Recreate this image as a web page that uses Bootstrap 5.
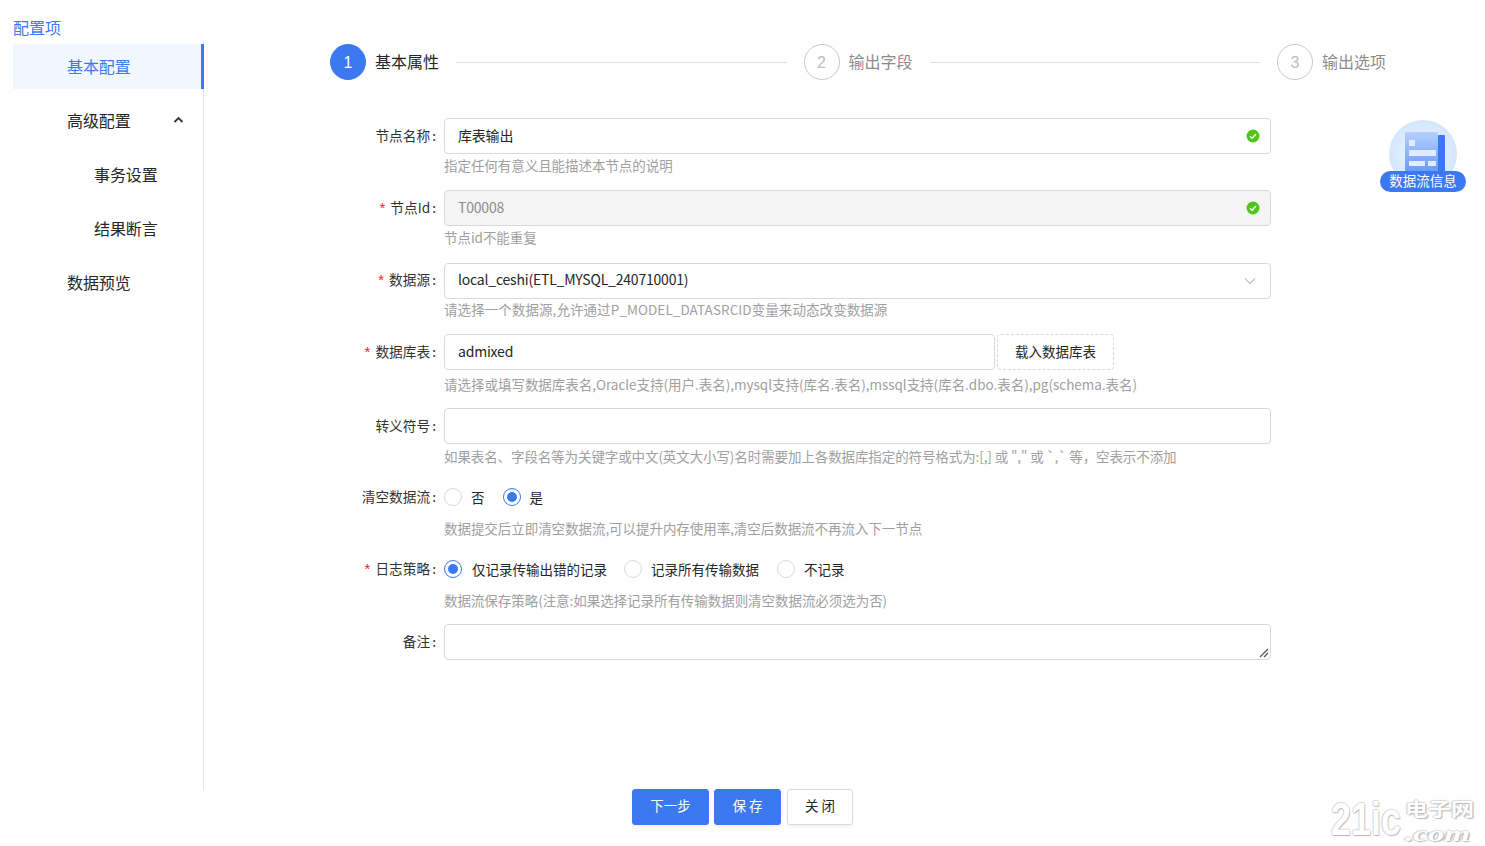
<!DOCTYPE html>
<html lang="zh">
<head>
<meta charset="utf-8">
<title>配置项</title>
<link rel="stylesheet" href="https://cdn.jsdelivr.net/npm/bootstrap@5.3.0/dist/css/bootstrap.min.css">
<style>
:root{--blue:#3c78f0;--line:#d9d9d9;}
html,body{height:100%;}
body{font-family:"Noto Sans CJK SC","Liberation Sans",sans-serif;font-size:14px;color:#262626;background:#fff;overflow:hidden;}
.shell{width:1485px;height:846px;position:relative;}
.upper{height:789px;}
.side{width:204px;flex:none;padding:17px 0 0 13px;}
.side-title{font-size:16px;line-height:20px;color:var(--blue);margin-bottom:2px;}
.side-list{border-right:1px solid #e8e8e8;height:751px;padding-top:5px;}
.side-item{height:45px;line-height:45px;margin-bottom:9px;padding-left:54px;font-size:16px;letter-spacing:-.1px;color:#262626;position:relative;}
.side-item.sub{padding-left:81px;}
.side-item.on{background:#f0f7ff;color:var(--blue);border-right:3px solid var(--blue);margin-right:-1px;}
.chev{position:absolute;left:160px;top:18px;width:11px;height:8px;}
.work{flex:1;padding-top:44px;min-width:0;}
.steps{margin-left:126px;width:1056px;}
.step{flex:1 1 0;}
.step:last-child{flex:none;}
.step-dot{width:36px;height:36px;border-radius:50%;border:1px solid #c9c9c9;color:#bdbdbd;font-size:16px;flex:none;font-family:"Liberation Sans",sans-serif;padding-top:1px;}
.step.now .step-dot{background:var(--blue);border-color:var(--blue);color:#fff;}
.step-name{font-size:16px;margin-left:9px;color:#8c8c8c;white-space:nowrap;line-height:22px;margin-top:-2px;}
.step.now .step-name{color:#262626;}
.step-line{flex:1;height:1px;background:#e0e0e0;margin:0 17px;}
.fields{margin-top:38px;margin-left:126px;width:941px;}
.field{height:72px;}
.field.h73{height:73px;}
.field.h71{height:71px;}
.field.h74{height:74px;}
.fld-label{width:106px;flex:none;height:36px;line-height:34px;text-align:right;white-space:nowrap;font-size:13.7px;margin-right:8px;color:#333;}
.fld-label.up{line-height:32px;}
.colon{margin-left:2px;}
.req{color:#f5222d;font-family:"Liberation Sans",sans-serif;margin-right:5px;font-size:15px;}
.fld-body{flex:1;min-width:0;}
.inp{height:36px;border:1px solid var(--line);border-radius:4px;padding:0 13px;line-height:32px;font-size:14px;color:#262626;position:relative;letter-spacing:-.2px;white-space:nowrap;}
.inp.off{background:#f5f5f5;color:#8c8c8c;}
.inp.pick{line-height:30px;}
.inp.short{width:551px;flex:none;}
.hint{font-size:13.5px;line-height:20px;margin-top:1px;color:#a0a0a0;white-space:nowrap;letter-spacing:-.05px;}
.hint.wide{letter-spacing:.07px;margin-top:0;}
.hint.wider{letter-spacing:-.02px;margin-top:4px;}
.hint.tight{letter-spacing:-.1px;margin-top:2px;}
.ok{position:absolute;right:10px;top:10px;width:14px;height:14px;}
.arrow{position:absolute;right:14px;top:13px;width:12px;height:8px;}
.load{width:117px;height:36px;margin-left:2px;border:1px dashed var(--line);border-radius:4px;text-align:center;font-size:13.5px;color:#262626;flex:none;background:#fff;padding:0 0 2px;}
.radio-row{height:34px;align-items:center;}
.dot{width:18px;height:18px;border-radius:50%;border:1px solid var(--line);background:#fff;flex:none;position:relative;}
.dot.sel{border-color:var(--blue);}
.dot.sel::after{content:"";position:absolute;inset:3px;border-radius:50%;background:var(--blue);}
.opt{font-size:13.5px;margin-left:9px;margin-right:18px;white-space:nowrap;line-height:18px;color:#262626;}
.opt.nxt{margin-left:9px;margin-right:18px;}
.opt.fst{margin-left:10px;margin-right:17px;}
.hint.lo{margin-top:4px;}
.area{position:relative;}
.grip{position:absolute;right:1px;bottom:1px;width:10px;height:10px;}
.foot{height:57px;}
.fbtn{height:36px;border-radius:3px;font-size:13.5px;padding:0 0 4px;border:1px solid var(--blue);background:var(--blue);color:#fff;box-shadow:0 2px 3px rgba(0,0,0,.06);}
.fbtn.w1{width:77px;}
.fbtn.w2{width:67px;margin-left:5px;}
.fbtn.w3{width:66px;margin-left:6px;background:#fff;border-color:var(--line);color:#262626;}
.flow-info{position:absolute;left:1380px;top:120px;width:86px;height:72px;}
.flow-info svg{position:absolute;left:9px;top:0;width:68px;height:68px;}
.flow-tag{position:absolute;left:0;top:51px;width:86px;height:21px;border-radius:11px;background:var(--blue);color:#fff;font-size:13.5px;line-height:19px;text-align:center;white-space:nowrap;}
.wm{position:absolute;left:1331px;top:793px;width:148px;height:53px;color:#fff;text-shadow:1px 1px 1px #b5b5b5,-1px 0 1px #d0d0d0,0 -1px 1px #dcdcdc;}
.wm-a{position:absolute;left:0;top:0;font-family:"Liberation Sans",sans-serif;font-weight:700;font-size:46px;line-height:53px;display:inline-block;transform:scaleX(.78);transform-origin:0 50%;}
.wm-b{position:absolute;left:74px;top:2px;font-size:18px;line-height:26px;font-weight:700;display:inline-block;transform:scaleX(1.28);transform-origin:0 50%;}
.wm-c{position:absolute;left:74px;top:28px;font-family:"Liberation Serif",serif;font-style:italic;font-weight:700;font-size:22px;line-height:25px;display:inline-block;transform:scaleX(1.5);transform-origin:0 50%;}
</style>
</head>
<body>
<div class="shell">
  <div class="upper d-flex">
    <aside class="side">
      <div class="side-title">配置项</div>
      <div class="side-list">
        <div class="side-item on">基本配置</div>
        <div class="side-item">高级配置
          <svg class="chev" viewBox="0 0 11 8"><path d="M1.5 6 L5.5 2 L9.5 6" fill="none" stroke="#333" stroke-width="1.8"/></svg>
        </div>
        <div class="side-item sub">事务设置</div>
        <div class="side-item sub">结果断言</div>
        <div class="side-item">数据预览</div>
      </div>
    </aside>
    <main class="work">
      <div class="steps d-flex align-items-center">
        <div class="step now d-flex align-items-center">
          <div class="step-dot d-flex align-items-center justify-content-center">1</div>
          <div class="step-name">基本属性</div>
          <div class="step-line"></div>
        </div>
        <div class="step d-flex align-items-center">
          <div class="step-dot d-flex align-items-center justify-content-center">2</div>
          <div class="step-name">输出字段</div>
          <div class="step-line"></div>
        </div>
        <div class="step d-flex align-items-center">
          <div class="step-dot d-flex align-items-center justify-content-center">3</div>
          <div class="step-name">输出选项</div>
        </div>
      </div>
      <form class="fields">
        <div class="field d-flex">
          <div class="fld-label">节点名称<span class="colon">:</span></div>
          <div class="fld-body">
            <div class="inp">库表输出
              <svg class="ok" viewBox="0 0 14 14"><circle cx="7" cy="7" r="6.5" fill="#52c41a"/><path d="M4 7.2 L6.2 9.2 L10 5" fill="none" stroke="#fff" stroke-width="1.4"/></svg>
            </div>
            <div class="hint">指定任何有意义且能描述本节点的说明</div>
          </div>
        </div>
        <div class="field h73 d-flex">
          <div class="fld-label"><span class="req">*</span>节点Id<span class="colon">:</span></div>
          <div class="fld-body">
            <div class="inp off">T00008
              <svg class="ok" viewBox="0 0 14 14"><circle cx="7" cy="7" r="6.5" fill="#52c41a"/><path d="M4 7.2 L6.2 9.2 L10 5" fill="none" stroke="#fff" stroke-width="1.4"/></svg>
            </div>
            <div class="hint">节点id不能重复</div>
          </div>
        </div>
        <div class="field h71 d-flex">
          <div class="fld-label up"><span class="req">*</span>数据源<span class="colon">:</span></div>
          <div class="fld-body">
            <div class="inp pick">local_ceshi(ETL_MYSQL_240710001)
              <svg class="arrow" viewBox="0 0 12 8"><path d="M1 1.5 L6 6.5 L11 1.5" fill="none" stroke="#bfbfbf" stroke-width="1.1"/></svg>
            </div>
            <div class="hint wide">请选择一个数据源,允许通过P_MODEL_DATASRCID变量来动态改变数据源</div>
          </div>
        </div>
        <div class="field h74 d-flex">
          <div class="fld-label"><span class="req">*</span>数据库表<span class="colon">:</span></div>
          <div class="fld-body">
            <div class="d-flex">
              <div class="inp short">admixed</div>
              <button type="button" class="load">载入数据库表</button>
            </div>
            <div class="hint wider">请选择或填写数据库表名,Oracle支持(用户.表名),mysql支持(库名.表名),mssql支持(库名.dbo.表名),pg(schema.表名)</div>
          </div>
        </div>
        <div class="field d-flex">
          <div class="fld-label">转义符号<span class="colon">:</span></div>
          <div class="fld-body">
            <div class="inp"></div>
            <div class="hint tight">如果表名、字段名等为关键字或中文(英文大小写)名时需要加上各数据库指定的符号格式为:[,] 或 "," 或 `,` 等，空表示不添加</div>
          </div>
        </div>
        <div class="field d-flex">
          <div class="fld-label up">清空数据流<span class="colon">:</span></div>
          <div class="fld-body">
            <div class="radio-row d-flex">
              <span class="dot"></span><span class="opt">否</span>
              <span class="dot sel"></span><span class="opt">是</span>
            </div>
            <div class="hint lo">数据提交后立即清空数据流,可以提升内存使用率,清空后数据流不再流入下一节点</div>
          </div>
        </div>
        <div class="field d-flex">
          <div class="fld-label up"><span class="req">*</span>日志策略<span class="colon">:</span></div>
          <div class="fld-body">
            <div class="radio-row d-flex">
              <span class="dot sel"></span><span class="opt fst">仅记录传输出错的记录</span>
              <span class="dot"></span><span class="opt nxt">记录所有传输数据</span>
              <span class="dot"></span><span class="opt nxt">不记录</span>
            </div>
            <div class="hint lo">数据流保存策略(注意:如果选择记录所有传输数据则清空数据流必须选为否)</div>
          </div>
        </div>
        <div class="field d-flex">
          <div class="fld-label">备注<span class="colon">:</span></div>
          <div class="fld-body">
            <div class="inp area">
              <svg class="grip" viewBox="0 0 10 10"><path d="M1 9 L9 1 M5 9 L9 5" stroke="#555" stroke-width="1.2" fill="none"/></svg>
            </div>
          </div>
        </div>
      </form>
    </main>
  </div>
  <div class="foot d-flex justify-content-center">
    <button type="button" class="fbtn w1">下一步</button>
    <button type="button" class="fbtn w2">保 存</button>
    <button type="button" class="fbtn w3">关 闭</button>
  </div>

  <div class="flow-info">
    <svg viewBox="0 0 68 68">
      <defs>
        <radialGradient id="halo" cx="50%" cy="50%" r="50%"><stop offset="0" stop-color="#f4f9ff"/><stop offset="1" stop-color="#d3e6ff"/></radialGradient>
        <linearGradient id="sheet" x1="0" y1="0" x2="0" y2="1"><stop offset="0" stop-color="#b4cffe"/><stop offset="1" stop-color="#6096f9"/></linearGradient>
      </defs>
      <circle cx="34" cy="34" r="34" fill="url(#halo)"/>
      <rect x="49" y="15" width="7" height="41" rx="1" fill="#3c78f0"/>
      <rect x="16" y="12" width="33" height="44" rx="2" fill="url(#sheet)"/>
      <rect x="20" y="20" width="6" height="6" fill="#e3ecff"/>
      <rect x="20" y="30" width="27" height="6" fill="#e3ecff"/>
      <rect x="20" y="41" width="16" height="5" fill="#e3ecff"/>
      <rect x="39" y="41" width="8" height="5" fill="#e3ecff"/>
    </svg>
    <div class="flow-tag">数据流信息</div>
  </div>

  <div class="wm">
    <span class="wm-a">21ic</span>
    <span class="wm-b">电子网</span>
    <span class="wm-c">.com</span>
  </div>
</div>
<script src="https://cdn.jsdelivr.net/npm/bootstrap@5.3.0/dist/js/bootstrap.bundle.min.js"></script>
</body>
</html>
